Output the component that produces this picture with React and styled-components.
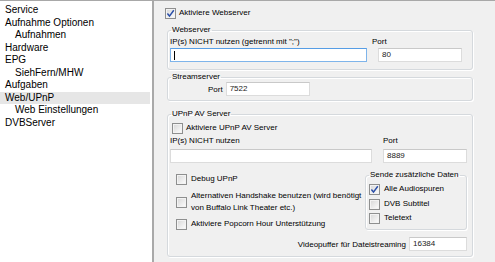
import React from 'react';
import styled, { createGlobalStyle } from 'styled-components';

const GlobalStyle = createGlobalStyle`
    html, body {
        margin: 0;
        padding: 0;
        background: #f0f0f0;
    }
    body {
        font-family: "Liberation Sans", Arial, sans-serif;
        font-size: 8px;
        color: #000;
    }
`;

const Window = styled.div`
    width: 495px;
    height: 262px;
    display: flex;
    overflow: hidden;
    border-top: 1px solid #a8a8a8;
    box-sizing: border-box;
`;

const Tree = styled.div`
    width: 152px;
    flex-shrink: 0;
    background: #fff;
    border-right: 2px solid #a9a9a9;
    padding-top: 3px;
    font-size: 10px;
    box-sizing: content-box;
`;

const TreeItem = styled.div`
    height: 12.5px;
    line-height: 12.5px;
    padding-left: ${props => (props.child ? 15 : 5)}px;
    margin-right: 2px;
    background: ${props => (props.selected ? '#e6e6e6' : 'transparent')};
    white-space: nowrap;
`;

const Panel = styled.div`
    flex: 1;
    background: #f0f0f0;
    padding: 6px 0 0 11px;
    display: flex;
    flex-direction: column;
`;

const CheckRow = styled.label`
    display: flex;
    align-items: center;
    gap: ${props => props.gap ?? 3}px;
    line-height: 12px;
    min-height: 12px;
    white-space: nowrap;
    margin-left: ${props => props.indent || 0}px;
    margin-top: ${props => props.mt || 0}px;
`;

const Box = styled.span`
    width: 9px;
    height: 9px;
    flex-shrink: 0;
    border: 1px solid #8e8f8f;
    background: linear-gradient(135deg, #d6d6d6 0%, #f2f2f2 70%, #fff 100%);
    box-shadow: inset 0 0 0 1px #f3f3f3;
    display: flex;
    align-items: center;
    justify-content: center;
`;

const Group = styled.fieldset`
    margin: ${props => props.mt || 0}px 0 0 2px;
    width: ${props => props.w || 306}px;
    box-sizing: border-box;
    border: 1px solid #d5d9dd;
    border-radius: 3px;
    box-shadow: inset 1px 1px 0 #fff, 1px 1px 0 #fff;
    padding: 0 ${props => props.pr ?? 10}px ${props => props.pb ?? 7}px 2px;
    min-inline-size: 0;
`;

const Legend = styled.legend`
    padding: 0 1px;
    margin-left: 1px;
    line-height: 12px;
    white-space: nowrap;
`;

const Grid = styled.div`
    display: grid;
    grid-template-columns: ${props => props.cols};
    column-gap: ${props => props.gap}px;
    margin-top: ${props => props.mt || 0}px;
`;

const Label = styled.div`
    line-height: 12px;
    height: 12px;
    margin-bottom: ${props => props.mb || 0}px;
`;

const Field = styled.div`
    height: 14px;
    box-sizing: border-box;
    background: #fff;
    border: 1px solid ${props => (props.focused ? '#7eb4ea' : '#dcdcdc')};
    border-top-color: ${props => (props.focused ? '#569de5' : '#c9c9c9')};
    width: ${props => (props.w ? `${props.w}px` : 'auto')};
    margin-left: ${props => props.ml || 0}px;
    padding-left: 3px;
    line-height: 12px;
    color: #222;
    display: flex;
    align-items: center;
`;

const Caret = styled.span`
    width: 1px;
    height: 9px;
    background: #000;
`;

const PortRow = styled.div`
    display: flex;
    align-items: center;
    margin-top: -1px;
    padding-left: 38px;
    gap: 3px;
`;

const Lower = styled.div`
    display: flex;
    justify-content: space-between;
    margin-top: 6px;
`;

const Options = styled.div`
    display: flex;
    flex-direction: column;
    padding-top: 4px;
`;

const BufferRow = styled.div`
    display: flex;
    justify-content: flex-end;
    align-items: center;
    gap: 3px;
    margin-top: 7px;
`;

const Check = () => (
    <svg width="9" height="9" viewBox="0 0 9 9">
        <path d="M1.4 4.6 L3.5 7.1 L7.8 1.2" fill="none" stroke="#2b4fa8" strokeWidth="1.5" />
    </svg>
);

const CheckBox = ({ checked }) => <Box>{checked && <Check />}</Box>;

const treeItems = [
    { label: 'Service' },
    { label: 'Aufnahme Optionen' },
    { label: 'Aufnahmen', child: true },
    { label: 'Hardware' },
    { label: 'EPG' },
    { label: 'SiehFern/MHW', child: true },
    { label: 'Aufgaben' },
    { label: 'Web/UPnP', selected: true },
    { label: 'Web Einstellungen', child: true },
    { label: 'DVBServer' },
];

const App = () => (
    <>
        <GlobalStyle />
        <Window>
            <Tree>
                {treeItems.map(item => (
                    <TreeItem key={item.label} child={item.child} selected={item.selected}>
                        {item.label}
                    </TreeItem>
                ))}
            </Tree>
            <Panel>
                <CheckRow>
                    <CheckBox checked />
                    Aktiviere Webserver
                </CheckRow>

                <Group mt={5}>
                    <Legend>Webserver</Legend>
                    <Grid cols="197px 90px" gap={5}>
                        <Label>IP(s) NICHT nutzen (getrennt mit ";")</Label>
                        <Label>Port</Label>
                        <Field focused><Caret /></Field>
                        <Field w={84} ml={6}>80</Field>
                    </Grid>
                </Group>

                <Group mt={1} pb={4}>
                    <Legend>Streamserver</Legend>
                    <PortRow>
                        <span>Port</span>
                        <Field w={84}>7522</Field>
                    </PortRow>
                </Group>

                <Group mt={7} pr={5} pb={5}>
                    <Legend>UPnP AV Server</Legend>
                    <CheckRow indent={2} mt={2}>
                        <CheckBox />
                        Aktiviere UPnP AV Server
                    </CheckRow>
                    <Grid cols="202px 84px" gap={11} mt={1}>
                        <Label mb={2}>IP(s) NICHT nutzen</Label>
                        <Label mb={2}>Port</Label>
                        <Field />
                        <Field>8889</Field>
                    </Grid>
                    <Lower>
                        <Options>
                            <CheckRow indent={6} gap={4}>
                                <CheckBox />
                                Debug UPnP
                            </CheckRow>
                            <CheckRow indent={6} gap={4} mt={5}>
                                <CheckBox />
                                <span>
                                    Alternativen Handshake benutzen (wird benötigt
                                    <br />
                                    von Buffalo Link Theater etc.)
                                </span>
                            </CheckRow>
                            <CheckRow indent={6} gap={4} mt={4}>
                                <CheckBox />
                                Aktiviere Popcorn Hour Unterstützung
                            </CheckRow>
                        </Options>
                        <Group w={102} pr={2} pb={5}>
                            <Legend>Sende zusätzliche Daten</Legend>
                            <CheckRow indent={1} gap={4} mt={2}>
                                <CheckBox checked />
                                Alle Audiospuren
                            </CheckRow>
                            <CheckRow indent={1} gap={4} mt={3}>
                                <CheckBox />
                                DVB Subtitel
                            </CheckRow>
                            <CheckRow indent={1} gap={4} mt={2}>
                                <CheckBox />
                                Teletext
                            </CheckRow>
                        </Group>
                    </Lower>
                    <BufferRow>
                        <span>Videopuffer für Dateistreaming</span>
                        <Field w={58}>16384</Field>
                    </BufferRow>
                </Group>
            </Panel>
        </Window>
    </>
);

export default App;
